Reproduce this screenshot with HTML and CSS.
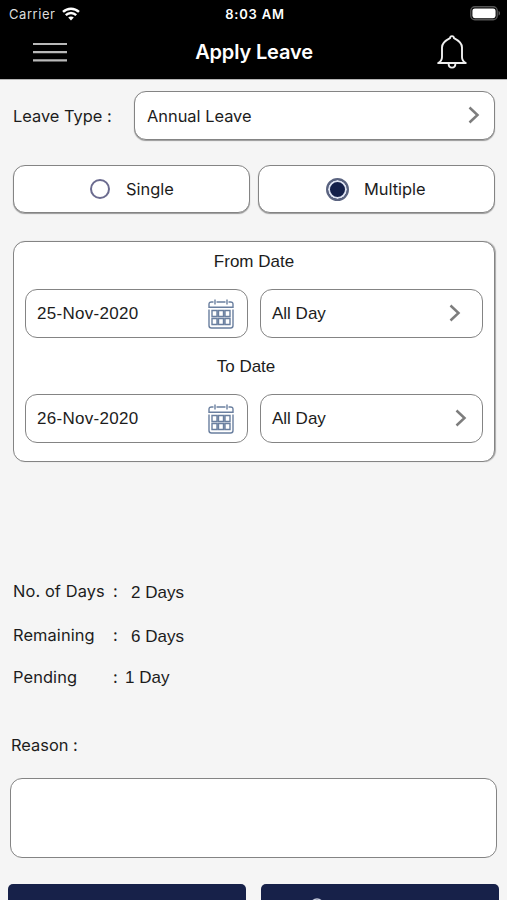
FILE: index.html
```
<!DOCTYPE html>
<html lang="en">
<head>
  <meta charset="UTF-8">
  <title>Apply Leave</title>
  <link rel="stylesheet" href="styles.css">
</head>
<body>
  <header>
    <div class="status-bar">
      <div class="carrier">
        <span>Carrier</span>
        <svg width="18" height="14" viewBox="0 0 18 14" fill="none" stroke="#fff" stroke-width="2.4">
          <path d="M1 4.9C5.5.6 12.5.6 17 4.9"/>
          <path d="M3.8 8.1C6.8 5.2 11.2 5.2 14.2 8.1"/>
          <path d="M6.2 10.6C7.8 9.1 10.2 9.1 11.8 10.6L9 13.5Z" fill="#fff" stroke="none"/>
        </svg>
      </div>
      <div class="time">8:03 AM</div>
      <svg class="battery" width="31" height="15" viewBox="0 0 31 15">
        <rect x=".8" y=".8" width="26.4" height="13" rx="4" fill="none" stroke="#555" stroke-width="1.4"/>
        <rect x="2.4" y="2.4" width="23.2" height="9.8" rx="2.4" fill="#fff"/>
        <path d="M28.6 5v4.6c1.8-.6 1.8-4 0-4.6z" fill="#666"/>
      </svg>
    </div>
    <div class="nav-bar">
      <svg class="menu" width="34" height="20" viewBox="0 0 34 20" stroke="#b9b9b9" stroke-width="2.2">
        <path d="M0 2h34M0 10.2h34M0 18.4h34"/>
      </svg>
      <h1>Apply Leave</h1>
      <svg class="bell" width="30" height="36" viewBox="0 0 30 36" fill="none" stroke="#eee" stroke-width="1.9" stroke-linejoin="round">
        <path d="M1.2 29H28.8C26 27.5 25 26 25 23V13.5C25 9 21.5 6.5 17 4.2C16.8 1.4 13.2 1.4 13 4.2C8.5 6.5 5 9 5 13.5V23C5 26 4 27.5 1.2 29Z"/>
        <path d="M11.6 29.5C11.6 35 18.4 35 18.4 29.5"/>
      </svg>
    </div>
  </header>

  <main>
    <div class="type-row">
      <label class="type-label">Leave Type :</label>
      <div class="box select type-select">
        <span>Annual Leave</span>
        <svg class="chevron" width="12" height="18" viewBox="0 0 12 18"><path d="M1.5 1.5L9.5 9L1.5 16.5"/></svg>
      </div>
    </div>

    <div class="mode-row">
      <div class="box radio-box">
        <span class="radio"></span>
        <span>Single</span>
      </div>
      <div class="box radio-box">
        <span class="radio checked"></span>
        <span>Multiple</span>
      </div>
    </div>

    <div class="box dates">
      <div class="date-title">From Date</div>
      <div class="date-row">
        <div class="box field">
          <span class="date">25-Nov-2020</span>
          <svg class="calendar" width="26" height="30" viewBox="0 0 26 30">
            <path d="M5.5 3H3.5Q1 3 1 5.3V8.2H25V5.3Q25 3 22.5 3H20.5M8.5 3H17.5M7 .5V5.5M19 .5V5.5M1 10.5V26.5Q1 29 3.5 29H22.5Q25 29 25 26.5V10.5"/>
            <path d="M4 11.5h5v6H4zM10.5 11.5h5v6h-5zM17 11.5h5v6h-5zM4 19.5h5v6H4zM10.5 19.5h5v6h-5zM17 19.5h5v6h-5z"/>
          </svg>
        </div>
        <div class="box field from-part">
          <span>All Day</span>
          <svg class="chevron" width="12" height="18" viewBox="0 0 12 18"><path d="M1.5 1.5L9.5 9L1.5 16.5"/></svg>
        </div>
      </div>
      <div class="date-title to-title">To Date</div>
      <div class="date-row">
        <div class="box field">
          <span class="date">26-Nov-2020</span>
          <svg class="calendar" width="26" height="30" viewBox="0 0 26 30">
            <path d="M5.5 3H3.5Q1 3 1 5.3V8.2H25V5.3Q25 3 22.5 3H20.5M8.5 3H17.5M7 .5V5.5M19 .5V5.5M1 10.5V26.5Q1 29 3.5 29H22.5Q25 29 25 26.5V10.5"/>
            <path d="M4 11.5h5v6H4zM10.5 11.5h5v6h-5zM17 11.5h5v6h-5zM4 19.5h5v6H4zM10.5 19.5h5v6h-5zM17 19.5h5v6h-5z"/>
          </svg>
        </div>
        <div class="box field to-part">
          <span>All Day</span>
          <svg class="chevron" width="12" height="18" viewBox="0 0 12 18"><path d="M1.5 1.5L9.5 9L1.5 16.5"/></svg>
        </div>
      </div>
    </div>

    <div class="summary">
      <div class="summary-row">
        <span class="name">No. of Days</span><span class="colon">:</span><span class="value">2 Days</span>
      </div>
      <div class="summary-row">
        <span class="name">Remaining</span><span class="colon">:</span><span class="value">6 Days</span>
      </div>
      <div class="summary-row pending">
        <span class="name">Pending</span><span class="colon">:</span><span class="value">1 Day</span>
      </div>
    </div>

    <label class="reason-label" for="reason">Reason :</label>
    <textarea class="reason" id="reason"></textarea>

    <div class="actions">
      <button type="button"></button>
      <button type="button">
        <svg width="14" height="14" viewBox="0 0 14 14" fill="none" stroke="#c5cadb" stroke-width="1.5"><circle cx="7" cy="7" r="6"/></svg>
      </button>
    </div>
  </main>
</body>
</html>
```
FILE: styles.css
```
* {
  box-sizing: border-box;
}

body {
  margin: 0;
  height: 900px;
  overflow: hidden;
  background-color: #f5f5f5;
  color: #1c1c1c;
  font-family: Inter, "Liberation Sans", sans-serif;
  font-size: 16.4px;
}

svg {
  display: block;
  flex-shrink: 0;
}

header {
  height: 80px;
  background-color: #000;
  border-bottom: 1px solid #b5b5b5;
  color: #fff;
}

.status-bar {
  display: grid;
  grid-template-columns: 1fr auto 1fr;
  align-items: center;
  height: 27px;
  padding: 0 6px 0 9px;
  font-size: 13px;
}

.carrier {
  display: flex;
  align-items: center;
  gap: 7px;
  color: #ddd;
  letter-spacing: 0.55px;
}

.time {
  font-weight: 600;
  font-size: 13px;
  letter-spacing: 0.8px;
}

.battery {
  justify-self: end;
}

.nav-bar {
  display: grid;
  grid-template-columns: 1fr auto 1fr;
  align-items: center;
  height: 50px;
  padding: 0 40px 0 33px;
}

.nav-bar h1 {
  margin: 0;
  padding-left: 8px;
  font-size: 20px;
  font-weight: 600;
  letter-spacing: -0.15px;
}

.bell {
  justify-self: end;
}

main {
  padding: 11px 12px 0 13px;
}

.box {
  background-color: #fff;
  border: 1px solid #848484;
  border-radius: 12px;
}

.type-row {
  display: flex;
  align-items: center;
  justify-content: space-between;
}

.select,
.field {
  display: flex;
  align-items: center;
  justify-content: space-between;
}

.type-select {
  width: 361px;
  height: 49px;
  padding: 0 14px 0 12px;
  box-shadow: 0 1px 1px #999;
}

.chevron {
  margin-top: -1px;
  fill: none;
  stroke: #7d7d7d;
  stroke-width: 2.5;
}

.mode-row {
  display: grid;
  grid-template-columns: 1fr 1fr;
  gap: 8px;
  margin-top: 25px;
}

.radio-box {
  display: flex;
  align-items: center;
  height: 48px;
  padding-left: 76px;
  gap: 16px;
  box-shadow: 0 1px 1px #999;
}

.radio-box + .radio-box {
  padding-left: 67px;
  gap: 15px;
}

.radio {
  width: 20px;
  height: 20px;
  border: 2px solid #6b6b8f;
  border-radius: 50%;
}

.radio.checked {
  width: 23px;
  height: 23px;
  border: 2px solid #5b6480;
  background-color: #14204a;
  box-shadow: inset 0 0 0 2px #dfe4f2;
}

.dates {
  height: 221px;
  margin-top: 28px;
  padding: 10px 11px 0;
  box-shadow: 1px 0 1px #aaa;
  font-family: "Liberation Sans", Arial, sans-serif;
  font-size: 17px;
}

.date-title {
  height: 20px;
  line-height: 20px;
  text-align: center;
}

.to-title {
  margin-top: 19px;
  padding-right: 16px;
}

.date-row {
  display: grid;
  grid-template-columns: 1fr 1fr;
  gap: 12px;
  margin-top: 17px;
}

.field {
  height: 49px;
  padding: 0 13px 0 11px;
}

.date {
  letter-spacing: 0.3px;
}

.from-part {
  padding-right: 21px;
}

.to-part {
  padding-right: 15px;
}

.calendar {
  fill: none;
  stroke: #6a7f9f;
  stroke-width: 1.4;
}

.summary {
  margin-top: 119px;
}

.summary-row {
  display: flex;
  height: 22px;
  line-height: 21px;
  margin-bottom: 22px;
}

.summary-row.pending {
  margin-top: -2px;
}

.name {
  width: 100px;
  letter-spacing: 0.1px;
}

.colon {
  width: 18px;
}

.value {
  font-family: "Liberation Sans", Arial, sans-serif;
  font-size: 17px;
  line-height: 23px;
}

.pending .colon {
  width: 12px;
}

.pending .value {
  line-height: 22px;
}

.reason-label {
  display: block;
  height: 22px;
  margin: 46px 0 0 -2px;
  line-height: 21px;
}

.reason {
  display: block;
  width: 487px;
  height: 80px;
  margin: 21px 0 0 -3px;
  padding: 10px;
  border: 1px solid #848484;
  border-radius: 12px;
  background-color: #fff;
  resize: none;
}

.actions {
  display: grid;
  grid-template-columns: 238px 238px;
  gap: 15px;
  margin: 26px 0 0 -5px;
}

.actions button {
  height: 49px;
  padding: 14px 0 0 49px;
  border: none;
  border-radius: 5px;
  background-color: #172149;
  display: flex;
  align-items: flex-start;
}
```
